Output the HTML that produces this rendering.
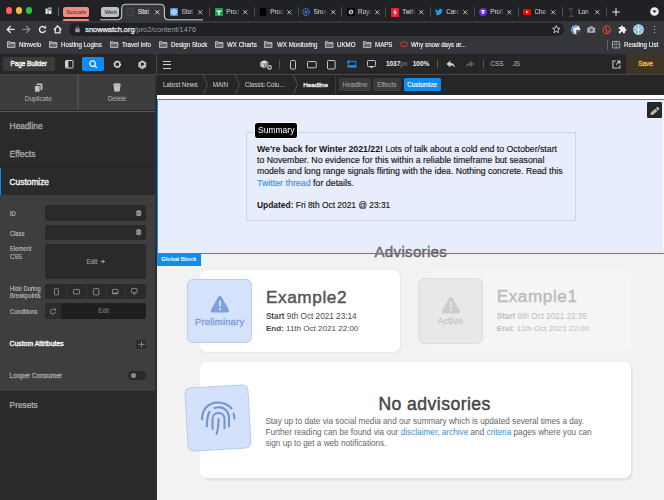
<!DOCTYPE html>
<html><head><meta charset="utf-8">
<style>
*{box-sizing:border-box;margin:0;padding:0}
html,body{width:664px;height:500px;overflow:hidden;background:#2b2b2b}
body{position:relative;font-family:"Liberation Sans",sans-serif;}
.a{position:absolute}
.t{position:absolute;white-space:nowrap}
svg{position:absolute;overflow:visible}
b{font-weight:700;-webkit-text-stroke-width:0}
</style></head><body>
<div class="a" style="left:0px;top:0px;width:664.00px;height:21.00px;background:#202124;"></div>
<div class="a" style="left:6.200000000000001px;top:7.4px;width:6.2px;height:6.2px;border-radius:50%;background:#fe5f57"></div>
<div class="a" style="left:15.799999999999999px;top:7.4px;width:6.2px;height:6.2px;border-radius:50%;background:#febc2e"></div>
<div class="a" style="left:25.799999999999997px;top:7.4px;width:6.2px;height:6.2px;border-radius:50%;background:#28c840"></div>
<svg style="left:45px;top:7px;" width="7" height="8" viewBox="0 0 7 8"><rect x="0.5" y="1.5" width="2.2" height="5.5" fill="#e8eaed"/><rect x="3.4" y="0.5" width="3" height="6.5" fill="#e8eaed"/><rect x="4.2" y="1.5" width="1.4" height="2" fill="#202124"/></svg>
<div class="a" style="left:58px;top:7px;width:1.00px;height:9.00px;background:#5f6368;"></div>
<div class="a" style="left:63px;top:7.2px;width:26px;height:9.8px;border-radius:2.5px;background:#f28b82"></div>
<div class="t" style="left:66.2px;top:8.48px;font-size:6.2px;line-height:7.44px;color:#4a2522;font-weight:400;">Soicals</div>
<div class="a" style="left:63px;top:19px;width:26.00px;height:2.00px;background:#f28b82;border-radius:1px 1px 0 0"></div>
<div class="a" style="left:101px;top:7.2px;width:18px;height:10.3px;border-radius:2.5px;background:#bdc1c6"></div>
<div class="t" style="left:104.4px;top:8.18px;font-size:6.2px;line-height:7.44px;color:#202124;font-weight:400;">Web</div>
<svg style="left:0px;top:0px;" width="664" height="22" viewBox="0 0 664 22"><path d="M100 22 V19.8 H117.5 Q121.7 19.8 121.7 15.6 V8.5 Q121.7 4.3 125.9 4.3 H160.2 Q164.4 4.3 164.4 8.5 V15.6 Q164.4 19.8 168.6 19.8 H203 V22Z" fill="#35363a"/><path d="M100 19.8 H117.5 Q121.7 19.8 121.7 15.6 V8.5 Q121.7 4.3 125.9 4.3 H160.2 Q164.4 4.3 164.4 8.5 V15.6 Q164.4 19.8 168.6 19.8 H203" fill="none" stroke="#c4c7cb" stroke-width="1.1"/></svg>
<div class="a" style="left:127.2px;top:8.4px;width:6.8px;height:7.2px;border-radius:1px;background:#38393c;border:0.8px solid #45464a"></div>
<div class="t" style="left:138.0px;top:8.42px;font-size:6.3px;line-height:7.56px;color:#eef0f2;font-weight:400;width:13.5px;overflow:hidden;-webkit-mask-image:linear-gradient(90deg,#000 55%,transparent);-webkit-text-stroke:0.1px #eef0f2">Stat</div>
<svg style="left:154.7px;top:9.8px;" width="4.6" height="4.6" viewBox="0 0 4.6 4.6"><path d="M0.3 0.3L4.3 4.3M4.3 0.3L0.3 4.3" stroke="#eceef0" stroke-width="0.9"/></svg>
<svg style="left:170.2px;top:8px;" width="8" height="8" viewBox="0 0 8 8"><rect width="8" height="8" rx="1" fill="#4a90d9"/><circle cx="4" cy="4" r="2.4" fill="none" stroke="#e6f0fb" stroke-width="0.9"/><path d="M4 0.8V7.2M1 2.5L7 5.5M1 5.5L7 2.5" stroke="#e6f0fb" stroke-width="0.6"/></svg>
<div class="t" style="left:181.7px;top:8.42px;font-size:6.3px;line-height:7.56px;color:#c9ccd0;font-weight:400;width:13.5px;overflow:hidden;-webkit-mask-image:linear-gradient(90deg,#000 55%,transparent);-webkit-text-stroke:0.1px #c9ccd0">Stat</div>
<svg style="left:198.39999999999998px;top:9.8px;" width="4.6" height="4.6" viewBox="0 0 4.6 4.6"><path d="M0.3 0.3L4.3 4.3M4.3 0.3L0.3 4.3" stroke="#d5d7db" stroke-width="0.9"/></svg>
<div class="a" style="left:209.0px;top:7.2px;width:1.00px;height:9.60px;background:#4a4c50;"></div>
<svg style="left:214.8px;top:8px;" width="8" height="8" viewBox="0 0 8 8"><rect width="8" height="8" rx="0.8" fill="#1e9e4c"/><path d="M1.5 3.2H6.5M4 3.2V7" stroke="#fff" stroke-width="1.3"/></svg>
<div class="t" style="left:226.3px;top:8.42px;font-size:6.3px;line-height:7.56px;color:#c9ccd0;font-weight:400;width:13.5px;overflow:hidden;-webkit-mask-image:linear-gradient(90deg,#000 55%,transparent);-webkit-text-stroke:0.1px #c9ccd0">Prod</div>
<svg style="left:243.0px;top:9.8px;" width="4.6" height="4.6" viewBox="0 0 4.6 4.6"><path d="M0.3 0.3L4.3 4.3M4.3 0.3L0.3 4.3" stroke="#d5d7db" stroke-width="0.9"/></svg>
<div class="a" style="left:253.60000000000002px;top:7.2px;width:1.00px;height:9.60px;background:#4a4c50;"></div>
<svg style="left:258.8px;top:8px;" width="8" height="8" viewBox="0 0 8 8"><rect x="1" y="0" width="6" height="8" rx="0.8" fill="#000"/><rect x="3.6" y="6" width="0.8" height="0.8" fill="#555"/></svg>
<div class="t" style="left:270.3px;top:8.42px;font-size:6.3px;line-height:7.56px;color:#c9ccd0;font-weight:400;width:13.5px;overflow:hidden;-webkit-mask-image:linear-gradient(90deg,#000 55%,transparent);-webkit-text-stroke:0.1px #c9ccd0">Prod</div>
<svg style="left:287.0px;top:9.8px;" width="4.6" height="4.6" viewBox="0 0 4.6 4.6"><path d="M0.3 0.3L4.3 4.3M4.3 0.3L0.3 4.3" stroke="#d5d7db" stroke-width="0.9"/></svg>
<div class="a" style="left:297.6px;top:7.2px;width:1.00px;height:9.60px;background:#4a4c50;"></div>
<svg style="left:302.3px;top:8px;" width="8" height="8" viewBox="0 0 8 8"><circle cx="4" cy="4" r="3.3" fill="none" stroke="#4a90e2" stroke-width="1.3" stroke-dasharray="1.2 0.8"/><circle cx="4" cy="4" r="1.6" fill="#2a6fd0"/></svg>
<div class="t" style="left:313.8px;top:8.42px;font-size:6.3px;line-height:7.56px;color:#c9ccd0;font-weight:400;width:13.5px;overflow:hidden;-webkit-mask-image:linear-gradient(90deg,#000 55%,transparent);-webkit-text-stroke:0.1px #c9ccd0">Snov</div>
<svg style="left:330.5px;top:9.8px;" width="4.6" height="4.6" viewBox="0 0 4.6 4.6"><path d="M0.3 0.3L4.3 4.3M4.3 0.3L0.3 4.3" stroke="#d5d7db" stroke-width="0.9"/></svg>
<div class="a" style="left:341.1px;top:7.2px;width:1.00px;height:9.60px;background:#4a4c50;"></div>
<svg style="left:346.6px;top:8px;" width="8" height="8" viewBox="0 0 8 8"><rect width="8" height="8" rx="1" fill="#000"/><circle cx="4" cy="4" r="2" fill="none" stroke="#fff" stroke-width="0.9"/><path d="M2.3 4.6L5.8 3.2" stroke="#fff" stroke-width="0.8"/></svg>
<div class="t" style="left:358.1px;top:8.42px;font-size:6.3px;line-height:7.56px;color:#c9ccd0;font-weight:400;width:13.5px;overflow:hidden;-webkit-mask-image:linear-gradient(90deg,#000 55%,transparent);-webkit-text-stroke:0.1px #c9ccd0">Roya</div>
<svg style="left:374.8px;top:9.8px;" width="4.6" height="4.6" viewBox="0 0 4.6 4.6"><path d="M0.3 0.3L4.3 4.3M4.3 0.3L0.3 4.3" stroke="#d5d7db" stroke-width="0.9"/></svg>
<div class="a" style="left:385.40000000000003px;top:7.2px;width:1.00px;height:9.60px;background:#4a4c50;"></div>
<svg style="left:390.8px;top:7.5px;" width="8" height="9" viewBox="0 0 8 9"><rect width="8" height="9" fill="#e8222e"/><path d="M4.8 0.8L2.2 4.8H4L3 8.2L5.9 4H4.2Z" fill="#fff"/></svg>
<div class="t" style="left:402.3px;top:8.42px;font-size:6.3px;line-height:7.56px;color:#c9ccd0;font-weight:400;width:13.5px;overflow:hidden;-webkit-mask-image:linear-gradient(90deg,#000 55%,transparent);-webkit-text-stroke:0.1px #c9ccd0">Twitt</div>
<svg style="left:419.0px;top:9.8px;" width="4.6" height="4.6" viewBox="0 0 4.6 4.6"><path d="M0.3 0.3L4.3 4.3M4.3 0.3L0.3 4.3" stroke="#d5d7db" stroke-width="0.9"/></svg>
<div class="a" style="left:429.6px;top:7.2px;width:1.00px;height:9.60px;background:#4a4c50;"></div>
<svg style="left:434.8px;top:8px;" width="8" height="8" viewBox="0 0 8 8"><path d="M7.8 1.6c-.3.1-.6.2-.9.2.3-.2.6-.5.7-.9-.3.2-.7.3-1 .4-.3-.3-.7-.5-1.2-.5-.9 0-1.6.7-1.6 1.6 0 .1 0 .3.0.4C2.5 2.7 1.3 2.1.5 1.1c-.1.2-.2.5-.2.8 0 .6.3 1 .7 1.3-.3 0-.5-.1-.7-.2 0 .8.6 1.4 1.3 1.6-.1 0-.3.1-.4.1h-.3c.2.6.8 1.1 1.5 1.1-.6.4-1.2.7-2 .7H0c.7.4 1.5.7 2.5.7 3 0 4.6-2.5 4.6-4.6v-.2c.3-.3.6-.5.7-.8z" fill="#1d9bf0"/></svg>
<div class="t" style="left:446.3px;top:8.42px;font-size:6.3px;line-height:7.56px;color:#c9ccd0;font-weight:400;width:13.5px;overflow:hidden;-webkit-mask-image:linear-gradient(90deg,#000 55%,transparent);-webkit-text-stroke:0.1px #c9ccd0">Card</div>
<svg style="left:463.0px;top:9.8px;" width="4.6" height="4.6" viewBox="0 0 4.6 4.6"><path d="M0.3 0.3L4.3 4.3M4.3 0.3L0.3 4.3" stroke="#d5d7db" stroke-width="0.9"/></svg>
<div class="a" style="left:473.6px;top:7.2px;width:1.00px;height:9.60px;background:#4a4c50;"></div>
<svg style="left:478.8px;top:8px;" width="8" height="8" viewBox="0 0 8 8"><circle cx="4" cy="4" r="4" fill="#6c2bd9"/><path d="M2.2 2.6H5.8M4 2.6V6" stroke="#fff" stroke-width="1.1"/><path d="M2.6 3.8 L4 5.4 L5.4 3.8" fill="none" stroke="#fff" stroke-width="0.8"/></svg>
<div class="t" style="left:490.3px;top:8.42px;font-size:6.3px;line-height:7.56px;color:#c9ccd0;font-weight:400;width:13.5px;overflow:hidden;-webkit-mask-image:linear-gradient(90deg,#000 55%,transparent);-webkit-text-stroke:0.1px #c9ccd0">Profi</div>
<svg style="left:507.0px;top:9.8px;" width="4.6" height="4.6" viewBox="0 0 4.6 4.6"><path d="M0.3 0.3L4.3 4.3M4.3 0.3L0.3 4.3" stroke="#d5d7db" stroke-width="0.9"/></svg>
<div class="a" style="left:517.6px;top:7.2px;width:1.00px;height:9.60px;background:#4a4c50;"></div>
<svg style="left:523.0px;top:9px;" width="8" height="6" viewBox="0 0 8 6"><rect width="8" height="6" rx="1.5" fill="#ff0000"/><path d="M3.2 1.7V4.3L5.4 3Z" fill="#fff"/></svg>
<div class="t" style="left:534.5px;top:8.42px;font-size:6.3px;line-height:7.56px;color:#c9ccd0;font-weight:400;width:13.5px;overflow:hidden;-webkit-mask-image:linear-gradient(90deg,#000 55%,transparent);-webkit-text-stroke:0.1px #c9ccd0">Cha</div>
<svg style="left:551.2px;top:9.8px;" width="4.6" height="4.6" viewBox="0 0 4.6 4.6"><path d="M0.3 0.3L4.3 4.3M4.3 0.3L0.3 4.3" stroke="#d5d7db" stroke-width="0.9"/></svg>
<div class="a" style="left:561.8px;top:7.2px;width:1.00px;height:9.60px;background:#4a4c50;"></div>
<svg style="left:566.8px;top:7.5px;" width="8" height="9" viewBox="0 0 8 9"><path d="M2.5 0.5H5.5M4 0.5V8.5M2.5 8.5H5.5M2 0.5V2M6 7V8.5" stroke="#6b6b6b" stroke-width="0.6" fill="none"/></svg>
<div class="t" style="left:578.3px;top:8.42px;font-size:6.3px;line-height:7.56px;color:#c9ccd0;font-weight:400;width:13.5px;overflow:hidden;-webkit-mask-image:linear-gradient(90deg,#000 55%,transparent);-webkit-text-stroke:0.1px #c9ccd0">Lon</div>
<svg style="left:595.0px;top:9.8px;" width="4.6" height="4.6" viewBox="0 0 4.6 4.6"><path d="M0.3 0.3L4.3 4.3M4.3 0.3L0.3 4.3" stroke="#d5d7db" stroke-width="0.9"/></svg>
<div class="a" style="left:605.5999999999999px;top:7.2px;width:1.00px;height:9.60px;background:#4a4c50;"></div>
<svg style="left:612px;top:8px;" width="8" height="8" viewBox="0 0 8 8"><path d="M4 0.3V7.7M0.3 4H7.7" stroke="#e8eaed" stroke-width="1.1"/></svg>
<svg style="left:650px;top:6.5px;" width="9" height="9" viewBox="0 0 9 9"><circle cx="4.5" cy="4.5" r="4.3" fill="#e8eaed"/><path d="M2.4 3.6L4.5 5.9L6.6 3.6Z" fill="#202124"/></svg>
<div class="a" style="left:0px;top:21px;width:664.00px;height:33.00px;background:#35363a;"></div>
<svg style="left:6px;top:25px;" width="9" height="9" viewBox="0 0 9 9"><path d="M8.6 4.4H1.4M4.7 1L1.2 4.4L4.7 7.8" stroke="#e8eaed" stroke-width="1.3" fill="none"/></svg>
<svg style="left:22px;top:25px;" width="9" height="9" viewBox="0 0 9 9"><path d="M0.4 4.4H7.6M4.3 1L7.8 4.4L4.3 7.8" stroke="#8a8c90" stroke-width="1.2" fill="none"/></svg>
<svg style="left:37.5px;top:25.2px;" width="9" height="9" viewBox="0 0 9 9"><path d="M7.4 5.3A3 3 0 1 1 6.4 2.2" stroke="#e8eaed" stroke-width="1.35" fill="none"/><path d="M5.2 3.4H8.1V0.5Z" fill="#e8eaed"/></svg>
<svg style="left:53px;top:25px;" width="9" height="9" viewBox="0 0 9 9"><path d="M0.9 4.8L4.6 1L8.3 4.8M2.2 3.7V7.8H7V3.7" stroke="#e8eaed" stroke-width="1.25" fill="none" stroke-linejoin="miter"/></svg>
<div class="a" style="left:68.7px;top:23.2px;width:495.5px;height:12.4px;border-radius:6.2px;background:#202124"></div>
<svg style="left:74.6px;top:26px;" width="5" height="6.5" viewBox="0 0 5 6.5"><rect x="0.3" y="2.6" width="4.4" height="3.6" rx="0.5" fill="#9aa0a6"/><path d="M1.3 2.8V1.8A1.2 1.2 0 0 1 3.7 1.8V2.8" stroke="#9aa0a6" stroke-width="0.7" fill="none"/></svg>
<div class="t" style="left:85.3px;top:25.57px;font-size:7.38px;line-height:8.86px;color:#e8eaed;font-weight:400;"><span style="color:#f1f3f4;-webkit-text-stroke:0.25px #f1f3f4">snowwatch.org</span><span style="color:#9aa0a6">/pro2/content/1476</span></div>
<svg style="left:551.5px;top:25.3px;" width="8.6" height="8.4" viewBox="0 0 8.6 8.4"><path d="M4.3 0.6L5.4 3.1L8 3.3L6 5L6.6 7.7L4.3 6.3L2 7.7L2.6 5L0.6 3.3L3.2 3.1Z" stroke="#e8eaed" stroke-width="0.8" fill="none" stroke-linejoin="round"/></svg>
<svg style="left:571.2px;top:24.6px;" width="9.6" height="9.6" viewBox="0 0 9.6 9.6"><circle cx="4.8" cy="4.8" r="4.5" fill="#e4eef9"/><path d="M6.2 1.6A3.4 3.4 0 1 0 3.6 8" stroke="#3d86d8" stroke-width="1.3" fill="none"/><rect x="5.3" y="4.9" width="3.6" height="4.2" rx="0.4" fill="#3a3b3e"/><rect x="6" y="5.8" width="2.2" height="0.5" fill="#cfd8e3"/></svg>
<svg style="left:587.3px;top:25.8px;" width="8.4" height="7" viewBox="0 0 8.4 7"><rect x="0.2" y="1.4" width="8" height="5.4" rx="0.9" fill="#aeb1b6"/><rect x="2.6" y="0.2" width="3.2" height="1.6" rx="0.3" fill="#aeb1b6"/><circle cx="4.2" cy="4.1" r="1.5" fill="#35363a"/><circle cx="4.2" cy="4.1" r="0.7" fill="#aeb1b6"/></svg>
<svg style="left:602.3px;top:24.6px;" width="9.6" height="9.6" viewBox="0 0 9.6 9.6"><circle cx="4.8" cy="4.8" r="3.9" fill="none" stroke="#d9461f" stroke-width="1.15"/><path d="M3.2 1.8L4.6 6.6" stroke="#d9461f" stroke-width="1.1"/><circle cx="5.4" cy="6" r="1.2" fill="none" stroke="#d9461f" stroke-width="0.9"/></svg>
<svg style="left:618.3px;top:25px;" width="9" height="9" viewBox="0 0 9 9"><g transform="scale(0.375)"><path d="M20.5 11H19V7c0-1.1-.9-2-2-2h-4V3.5C13 2.12 11.880 1 10.5 1S8 2.12 8 3.5V5H4c-1.1 0-1.99.9-1.99 2v3.8H3.5c1.49 0 2.7 1.21 2.7 2.7s-1.21 2.7-2.7 2.7H2V20c0 1.1.9 2 2 2h3.8v-1.5c0-1.49 1.21-2.7 2.7-2.7 1.49 0 2.7 1.21 2.7 2.7V22H17c1.1 0 2-.9 2-2v-4h1.5c1.38 0 2.5-1.12 2.5-2.5S21.88 11 20.5 11z" fill="#eceef0"/></g></svg>
<svg style="left:633.1px;top:24.0px;" width="11" height="11" viewBox="0 0 11 11"><circle cx="5.5" cy="5.5" r="5.3" fill="#dcecf8"/><circle cx="5.5" cy="5.5" r="4.3" fill="#5eaee9"/><path d="M5.5 1.5V9.5M2.05 3.5L8.95 7.5M2.05 7.5L8.95 3.5" stroke="#f4f9fd" stroke-width="0.85"/><path d="M4.6 2.1L5.5 3L6.4 2.1M4.6 8.9L5.5 8L6.4 8.9M2.3 4.6L3.4 4.6M2.6 6.8L3.4 6.4M8.4 6.8L7.6 6.4M8.7 4.6L7.6 4.6" stroke="#f4f9fd" stroke-width="0.55" fill="none"/></svg>
<div class="a" style="left:653.8px;top:25.85px;width:1.5px;height:1.5px;border-radius:50%;background:#e8eaed"></div>
<div class="a" style="left:653.8px;top:28.85px;width:1.5px;height:1.5px;border-radius:50%;background:#e8eaed"></div>
<div class="a" style="left:653.8px;top:31.85px;width:1.5px;height:1.5px;border-radius:50%;background:#e8eaed"></div>
<svg style="left:6.6px;top:41.3px;" width="8.4" height="7" viewBox="0 0 8.4 7"><path d="M0.45 0.6H3L3.8 1.5H7.95V6.45H0.45Z" fill="#67686c" stroke="#c4c7cb" stroke-width="0.85"/><path d="M0.45 2.4H7.95" stroke="#c4c7cb" stroke-width="0.7"/></svg>
<div class="t" style="left:18.7px;top:40.94px;font-size:6.6px;line-height:7.92px;color:#f0f2f4;font-weight:400;-webkit-text-stroke:0.15px #f0f2f4;transform:scaleX(0.935);transform-origin:0 50%">Nimvelo</div>
<svg style="left:48.7px;top:41.3px;" width="8.4" height="7" viewBox="0 0 8.4 7"><path d="M0.45 0.6H3L3.8 1.5H7.95V6.45H0.45Z" fill="#67686c" stroke="#c4c7cb" stroke-width="0.85"/><path d="M0.45 2.4H7.95" stroke="#c4c7cb" stroke-width="0.7"/></svg>
<div class="t" style="left:60.9px;top:40.94px;font-size:6.6px;line-height:7.92px;color:#f0f2f4;font-weight:400;-webkit-text-stroke:0.15px #f0f2f4;transform:scaleX(0.935);transform-origin:0 50%">Hosting Logins</div>
<svg style="left:109.8px;top:41.3px;" width="8.4" height="7" viewBox="0 0 8.4 7"><path d="M0.45 0.6H3L3.8 1.5H7.95V6.45H0.45Z" fill="#67686c" stroke="#c4c7cb" stroke-width="0.85"/><path d="M0.45 2.4H7.95" stroke="#c4c7cb" stroke-width="0.7"/></svg>
<div class="t" style="left:122px;top:40.94px;font-size:6.6px;line-height:7.92px;color:#f0f2f4;font-weight:400;-webkit-text-stroke:0.15px #f0f2f4;transform:scaleX(0.935);transform-origin:0 50%">Travel Info</div>
<svg style="left:158.6px;top:41.3px;" width="8.4" height="7" viewBox="0 0 8.4 7"><path d="M0.45 0.6H3L3.8 1.5H7.95V6.45H0.45Z" fill="#67686c" stroke="#c4c7cb" stroke-width="0.85"/><path d="M0.45 2.4H7.95" stroke="#c4c7cb" stroke-width="0.7"/></svg>
<div class="t" style="left:170.8px;top:40.94px;font-size:6.6px;line-height:7.92px;color:#f0f2f4;font-weight:400;-webkit-text-stroke:0.15px #f0f2f4;transform:scaleX(0.935);transform-origin:0 50%">Design Stock</div>
<svg style="left:214.8px;top:41.3px;" width="8.4" height="7" viewBox="0 0 8.4 7"><path d="M0.45 0.6H3L3.8 1.5H7.95V6.45H0.45Z" fill="#67686c" stroke="#c4c7cb" stroke-width="0.85"/><path d="M0.45 2.4H7.95" stroke="#c4c7cb" stroke-width="0.7"/></svg>
<div class="t" style="left:227px;top:40.94px;font-size:6.6px;line-height:7.92px;color:#f0f2f4;font-weight:400;-webkit-text-stroke:0.15px #f0f2f4;transform:scaleX(0.935);transform-origin:0 50%">WX Charts</div>
<svg style="left:264.4px;top:41.3px;" width="8.4" height="7" viewBox="0 0 8.4 7"><path d="M0.45 0.6H3L3.8 1.5H7.95V6.45H0.45Z" fill="#67686c" stroke="#c4c7cb" stroke-width="0.85"/><path d="M0.45 2.4H7.95" stroke="#c4c7cb" stroke-width="0.7"/></svg>
<div class="t" style="left:276.6px;top:40.94px;font-size:6.6px;line-height:7.92px;color:#f0f2f4;font-weight:400;-webkit-text-stroke:0.15px #f0f2f4;transform:scaleX(0.935);transform-origin:0 50%">WX Monitoring</div>
<svg style="left:324.7px;top:41.3px;" width="8.4" height="7" viewBox="0 0 8.4 7"><path d="M0.45 0.6H3L3.8 1.5H7.95V6.45H0.45Z" fill="#67686c" stroke="#c4c7cb" stroke-width="0.85"/><path d="M0.45 2.4H7.95" stroke="#c4c7cb" stroke-width="0.7"/></svg>
<div class="t" style="left:336.9px;top:40.94px;font-size:6.6px;line-height:7.92px;color:#f0f2f4;font-weight:400;-webkit-text-stroke:0.15px #f0f2f4;transform:scaleX(0.935);transform-origin:0 50%">UKMO</div>
<svg style="left:362.6px;top:41.3px;" width="8.4" height="7" viewBox="0 0 8.4 7"><path d="M0.45 0.6H3L3.8 1.5H7.95V6.45H0.45Z" fill="#67686c" stroke="#c4c7cb" stroke-width="0.85"/><path d="M0.45 2.4H7.95" stroke="#c4c7cb" stroke-width="0.7"/></svg>
<div class="t" style="left:374.8px;top:40.94px;font-size:6.6px;line-height:7.92px;color:#f0f2f4;font-weight:400;-webkit-text-stroke:0.15px #f0f2f4;transform:scaleX(0.935);transform-origin:0 50%">MAPS</div>
<svg style="left:400px;top:41px;" width="8" height="7" viewBox="0 0 8 7"><ellipse cx="4" cy="3.2" rx="3.4" ry="2.5" fill="none" stroke="#e0352b" stroke-width="1"/><path d="M1.8 5.2L1.2 6.8L3.2 5.6" fill="#e0352b"/></svg>
<div class="t" style="left:411px;top:40.94px;font-size:6.6px;line-height:7.92px;color:#f0f2f4;font-weight:400;-webkit-text-stroke:0.15px #f0f2f4;transform:scaleX(0.935);transform-origin:0 50%">Why snow days ar...</div>
<div class="a" style="left:606.5px;top:39.5px;width:1.00px;height:10.50px;background:#5f6368;"></div>
<svg style="left:612px;top:41px;" width="8.2" height="7.4" viewBox="0 0 8.2 7.4"><rect x="0.45" y="0.45" width="7.3" height="6.5" rx="0.8" fill="none" stroke="#bdc1c6" stroke-width="0.85"/><path d="M4.1 0.6V6.8M1.6 2.3H3M1.6 3.7H3M5.2 2.3H6.6M5.2 3.7H6.6" stroke="#bdc1c6" stroke-width="0.6"/></svg>
<div class="t" style="left:623.8px;top:40.94px;font-size:6.6px;line-height:7.92px;color:#f0f2f4;font-weight:400;-webkit-text-stroke:0.15px #f0f2f4;transform:scaleX(0.935);transform-origin:0 50%">Reading List</div>
<div class="a" style="left:0px;top:54px;width:664.00px;height:20.20px;background:#262626;"></div>
<div class="a" style="left:0px;top:74.2px;width:664.00px;height:1.00px;background:#474747;"></div>
<div class="a" style="left:2.9px;top:57.2px;width:52.1px;height:13.8px;border-radius:2px;background:#3a3a3a"></div>
<div class="t" style="left:10.4px;top:60.46px;font-size:6.4px;line-height:7.68px;color:#f4f4f4;font-weight:400;-webkit-text-stroke:0.38px #f4f4f4">Page Builder</div>
<svg style="left:64.5px;top:60px;" width="8.5" height="8.5" viewBox="0 0 8.5 8.5"><rect x="0.5" y="0.5" width="7.5" height="7.5" rx="0.6" fill="none" stroke="#d0d0d0" stroke-width="1"/><rect x="1" y="1" width="2.4" height="6.5" fill="#d0d0d0"/></svg>
<div class="a" style="left:82.4px;top:57.2px;width:21.6px;height:13.8px;border-radius:2px;background:#0f8cf0"></div>
<svg style="left:89px;top:60px;" width="8.5" height="8.5" viewBox="0 0 8.5 8.5"><circle cx="3.6" cy="3.6" r="2.8" fill="none" stroke="#fff" stroke-width="1.2"/><path d="M5.7 5.7L7.9 7.9" stroke="#fff" stroke-width="1.3"/></svg>
<svg style="left:113px;top:60px;" width="8.6" height="8.6" viewBox="0 0 8.6 8.6"><circle cx="4.3" cy="4.3" r="2.9" fill="none" stroke="#d8d8d8" stroke-width="1.9" stroke-dasharray="1.3 0.9"/><circle cx="4.3" cy="4.3" r="2.6" fill="none" stroke="#d8d8d8" stroke-width="1.2"/></svg>
<svg style="left:137.8px;top:59.6px;" width="8.5" height="9.4" viewBox="0 0 8.5 9.4"><path d="M4.25 0.2L8.2 2.5V6.9L4.25 9.2L0.3 6.9V2.5Z" fill="#bdbdbd"/><path d="M3 3H5A1.1 1.1 0 0 1 5 5.3H3.8V6.6H3Z" fill="#262626"/></svg>
<div class="a" style="left:156.2px;top:54px;width:0.80px;height:20.20px;background:#474747;"></div>
<div class="a" style="left:162.9px;top:61px;width:7.80px;height:1.10px;background:#d0d0d0;"></div>
<div class="a" style="left:162.9px;top:64.3px;width:7.80px;height:1.10px;background:#d0d0d0;"></div>
<div class="a" style="left:162.9px;top:67.6px;width:7.80px;height:1.10px;background:#d0d0d0;"></div>
<svg style="left:260.3px;top:59.5px;" width="13" height="10" viewBox="0 0 13 10"><path d="M4.3 0.3L8.3 2.1L4.3 3.9L0.3 2.1Z" fill="#dcdcdc"/><path d="M0.3 2.1L4.3 3.9V8.3L0.3 6.5Z" fill="#c6c6c6"/><path d="M4.3 3.9L8.3 2.1V6.5L4.3 8.3Z" fill="#9c9c9c"/><circle cx="9.6" cy="7.4" r="2.9" fill="#262626"/><circle cx="9.6" cy="7.4" r="1.75" fill="none" stroke="#cfcfcf" stroke-width="1.2"/></svg>
<div class="a" style="left:279px;top:59.6px;width:1.00px;height:9.20px;background:#555;"></div>
<svg style="left:289.5px;top:59.5px;" width="6" height="10" viewBox="0 0 6 10"><rect x="0.5" y="0.5" width="5" height="8.6" rx="0.9" fill="none" stroke="#cfcfcf" stroke-width="0.95"/></svg>
<svg style="left:307px;top:60.8px;" width="10" height="7.5" viewBox="0 0 10 7.5"><rect x="0.5" y="0.5" width="8.8" height="6.3" rx="0.9" fill="none" stroke="#cfcfcf" stroke-width="0.95"/></svg>
<svg style="left:327px;top:59.8px;" width="8.8" height="9.5" viewBox="0 0 8.8 9.5"><rect x="0.5" y="0.5" width="7.6" height="8.5" rx="0.9" fill="none" stroke="#cfcfcf" stroke-width="0.95"/></svg>
<svg style="left:346.5px;top:59.5px;" width="10" height="8" viewBox="0 0 10 8"><rect x="1.1" y="1.3" width="7.6" height="4.4" fill="none" stroke="#1e90ff" stroke-width="0.95"/><rect x="0.4" y="6" width="9.2" height="1.4" rx="0.3" fill="#1e90ff"/><circle cx="1.5" cy="1.7" r="1.3" fill="#1e90ff"/></svg>
<svg style="left:366.7px;top:59.8px;" width="9" height="8.5" viewBox="0 0 9 8.5"><rect x="0.5" y="0.5" width="8" height="6" rx="0.8" fill="none" stroke="#c4c4c4" stroke-width="1"/><path d="M3 6.5H6L5.5 7.9H3.5Z" fill="#c4c4c4"/></svg>
<div class="t" style="left:385.9px;top:60.30px;font-size:6.5px;line-height:7.80px;color:#f0f0f0;font-weight:700;">1037<span style="color:#8a8a8a;font-weight:400">px</span></div>
<div class="t" style="left:412.7px;top:60.30px;font-size:6.5px;line-height:7.80px;color:#f0f0f0;font-weight:700;">100%</div>
<div class="a" style="left:437.3px;top:58.8px;width:1.00px;height:10.60px;background:#555;"></div>
<svg style="left:445.8px;top:60px;" width="9.5" height="8.6" viewBox="0 0 9.5 8.6"><path d="M4.2 0.6L0.6 4.1L4.2 7.6V5.6C6.3 5.4 8 5.9 9 7.8C8.8 4.8 7 3 4.2 2.8Z" fill="#d0d0d0"/></svg>
<svg style="left:465px;top:60px;" width="9.5" height="8.6" viewBox="0 0 9.5 8.6"><path d="M5.3 0.6L8.9 4.1L5.3 7.6V5.6C3.2 5.4 1.5 5.9 0.5 7.8C0.7 4.8 2.5 3 5.3 2.8Z" fill="#5c5c5c"/></svg>
<div class="a" style="left:483px;top:58.8px;width:1.00px;height:10.60px;background:#555;"></div>
<div class="t" style="left:490.5px;top:60.42px;font-size:6.3px;line-height:7.56px;color:#bdbdbd;font-weight:400;">CSS</div>
<div class="t" style="left:512.7px;top:60.42px;font-size:6.3px;line-height:7.56px;color:#bdbdbd;font-weight:400;">JS</div>
<svg style="left:611.7px;top:59.6px;" width="9" height="9" viewBox="0 0 9 9"><path d="M3.8 0.9H0.9V7.9H7.9V5" stroke="#c8c8c8" stroke-width="1.05" fill="none" stroke-linejoin="miter"/><path d="M4.2 4.6L7.9 0.9M5 0.9H7.9V3.8" stroke="#c8c8c8" stroke-width="1.05" fill="none"/></svg>
<div class="a" style="left:626px;top:54px;width:38.00px;height:20.20px;background:#3f3527;"></div>
<div class="t" style="left:638.3px;top:60.22px;font-size:6.3px;line-height:7.56px;color:#eabb32;font-weight:400;-webkit-text-stroke:0.35px #eabb32">Save</div>
<div class="a" style="left:0px;top:75.2px;width:155.30px;height:424.80px;background:#2a2a2a;"></div>
<div class="a" style="left:155.3px;top:75.2px;width:1.40px;height:424.80px;background:#2e2e2e;"></div>
<div class="a" style="left:0px;top:75.2px;width:155.30px;height:35.30px;background:#3d3d3d;"></div>
<div class="a" style="left:77.3px;top:75.2px;width:1.30px;height:35.30px;background:#4e4e4e;"></div>
<div class="a" style="left:0px;top:110.5px;width:155.00px;height:1.20px;background:#575757;"></div>
<svg style="left:34px;top:82.5px;" width="9" height="9.5" viewBox="0 0 9 9.5"><rect x="2.8" y="0.5" width="5.6" height="6.6" fill="#c2c2c2"/><rect x="0.5" y="2.5" width="5.6" height="6.6" fill="#c2c2c2" stroke="#3b3b3b" stroke-width="0.9"/></svg>
<div class="t" style="left:24.8px;top:95.12px;font-size:6.47px;line-height:7.76px;color:#a6a6a6;font-weight:400;-webkit-text-stroke:0.12px #a6a6a6">Duplicate</div>
<svg style="left:113px;top:82.5px;" width="8" height="9" viewBox="0 0 8 9"><ellipse cx="4" cy="1.6" rx="3.8" ry="1.3" fill="#c2c2c2"/><path d="M0.5 2.6L1.4 8.6H6.6L7.5 2.6Z" fill="#c2c2c2"/></svg>
<div class="t" style="left:107.7px;top:95.12px;font-size:6.47px;line-height:7.76px;color:#a6a6a6;font-weight:400;-webkit-text-stroke:0.12px #a6a6a6">Delete</div>
<div class="t" style="left:9.6px;top:121.16px;font-size:8.4px;line-height:10.08px;color:#ababab;font-weight:400;-webkit-text-stroke:0.3px #ababab">Headline</div>
<div class="t" style="left:9.6px;top:148.80px;font-size:8.5px;line-height:10.20px;color:#ababab;font-weight:400;-webkit-text-stroke:0.3px #ababab">Effects</div>
<div class="a" style="left:0px;top:166.8px;width:155.00px;height:0.80px;background:#262626;"></div>
<div class="t" style="left:9.6px;top:177.29px;font-size:8.35px;line-height:10.02px;color:#f5f5f5;font-weight:400;-webkit-text-stroke:0.35px #f5f5f5">Customize</div>
<div class="a" style="left:0px;top:167.6px;width:1.30px;height:27.70px;background:#0f8cf0;"></div>
<div class="a" style="left:0px;top:195.3px;width:155.30px;height:195.70px;background:#3e3e3e;"></div>
<div class="t" style="left:9.6px;top:210.28px;font-size:6.7px;line-height:8.04px;color:#b4b4b4;font-weight:400;-webkit-text-stroke:0.2px #b4b4b4;transform:scaleX(0.87);transform-origin:0 50%">ID</div>
<div class="a" style="left:45px;top:205px;width:100.80px;height:15.60px;border-radius:2px;background:#2a2a2a"></div>
<svg style="left:135.8px;top:209.7px;" width="5.4" height="6.6" viewBox="0 0 5.4 6.6"><ellipse cx="2.7" cy="1.2" rx="2.5" ry="1" fill="#a0a0a0"/><path d="M0.2 1.8V5.3C0.2 6.2 5.2 6.2 5.2 5.3V1.8C5.2 2.6 0.2 2.6 0.2 1.8Z" fill="#a0a0a0"/><path d="M0.2 3.5C0.2 4.3 5.2 4.3 5.2 3.5" stroke="#2a2a2a" stroke-width="0.45" fill="none"/></svg>
<div class="t" style="left:9.6px;top:229.78px;font-size:6.7px;line-height:8.04px;color:#b4b4b4;font-weight:400;-webkit-text-stroke:0.2px #b4b4b4;transform:scaleX(0.87);transform-origin:0 50%">Class</div>
<div class="a" style="left:45px;top:225px;width:100.80px;height:15.20px;border-radius:2px;background:#2a2a2a"></div>
<svg style="left:135.8px;top:229.29999999999998px;" width="5.4" height="6.6" viewBox="0 0 5.4 6.6"><ellipse cx="2.7" cy="1.2" rx="2.5" ry="1" fill="#a0a0a0"/><path d="M0.2 1.8V5.3C0.2 6.2 5.2 6.2 5.2 5.3V1.8C5.2 2.6 0.2 2.6 0.2 1.8Z" fill="#a0a0a0"/><path d="M0.2 3.5C0.2 4.3 5.2 4.3 5.2 3.5" stroke="#2a2a2a" stroke-width="0.45" fill="none"/></svg>
<div class="t" style="left:9.6px;top:245.38px;font-size:6.7px;line-height:8.04px;color:#b4b4b4;font-weight:400;-webkit-text-stroke:0.2px #b4b4b4;transform:scaleX(0.87);transform-origin:0 50%">Element</div>
<div class="t" style="left:9.6px;top:252.68px;font-size:6.7px;line-height:8.04px;color:#b4b4b4;font-weight:400;-webkit-text-stroke:0.2px #b4b4b4;transform:scaleX(0.87);transform-origin:0 50%">CSS</div>
<div class="a" style="left:45px;top:244.2px;width:100.80px;height:34.60px;border-radius:2px;background:#2a2a2a"></div>
<div class="t" style="left:86.4px;top:257.70px;font-size:6.5px;line-height:7.80px;color:#9a9a9a;font-weight:400;-webkit-text-stroke:0.15px #9a9a9a">Edit</div>
<svg style="left:99.6px;top:259.2px;" width="5.4" height="5" viewBox="0 0 5.4 5"><path d="M0.4 2.5H4.6M2.6 0.5L4.6 2.5L2.6 4.5" stroke="#9a9a9a" stroke-width="1" fill="none"/></svg>
<div class="t" style="left:9.6px;top:284.68px;font-size:6.7px;line-height:8.04px;color:#b4b4b4;font-weight:400;-webkit-text-stroke:0.2px #b4b4b4;transform:scaleX(0.87);transform-origin:0 50%">Hide During</div>
<div class="t" style="left:9.6px;top:292.38px;font-size:6.7px;line-height:8.04px;color:#b4b4b4;font-weight:400;-webkit-text-stroke:0.2px #b4b4b4;transform:scaleX(0.87);transform-origin:0 50%">Breakpoints</div>
<div class="a" style="left:45px;top:284px;width:100.80px;height:14.60px;border-radius:2px;background:#2a2a2a"></div>
<div class="a" style="left:66.3px;top:286px;width:0;height:10.5px;border-left:0.8px dotted #464646"></div>
<div class="a" style="left:86px;top:286px;width:0;height:10.5px;border-left:0.8px dotted #464646"></div>
<div class="a" style="left:105.5px;top:286px;width:0;height:10.5px;border-left:0.8px dotted #464646"></div>
<div class="a" style="left:125.3px;top:286px;width:0;height:10.5px;border-left:0.8px dotted #464646"></div>
<svg style="left:53.9px;top:287.8px;" width="4.8" height="7.4" viewBox="0 0 4.8 7.4"><rect x="0.45" y="0.45" width="3.9" height="6.5" rx="0.8" fill="none" stroke="#8e8e8e" stroke-width="0.9"/></svg>
<svg style="left:72.5px;top:288.8px;" width="7" height="5.4" viewBox="0 0 7 5.4"><rect x="0.45" y="0.45" width="6.1" height="4.5" rx="0.7" fill="none" stroke="#8e8e8e" stroke-width="0.9"/></svg>
<svg style="left:92.6px;top:287.8px;" width="6.3" height="7.4" viewBox="0 0 6.3 7.4"><rect x="0.45" y="0.45" width="5.4" height="6.5" rx="0.9" fill="none" stroke="#8e8e8e" stroke-width="0.9"/></svg>
<svg style="left:112px;top:288.8px;" width="6.4" height="5.4" viewBox="0 0 6.4 5.4"><rect x="0.45" y="0.45" width="5.5" height="4.5" rx="0.6" fill="none" stroke="#8e8e8e" stroke-width="0.9"/><rect x="0.4" y="3.6" width="5.6" height="1.3" fill="#8e8e8e"/></svg>
<svg style="left:131.4px;top:287.8px;" width="6.6" height="6.8" viewBox="0 0 6.6 6.8"><rect x="0.45" y="0.45" width="5.7" height="4.4" rx="0.6" fill="none" stroke="#8e8e8e" stroke-width="0.9"/><path d="M1.8 5.2H4.8L4 6.4H2.6Z" fill="#8e8e8e"/></svg>
<div class="t" style="left:9.6px;top:307.88px;font-size:6.7px;line-height:8.04px;color:#b4b4b4;font-weight:400;-webkit-text-stroke:0.2px #b4b4b4;transform:scaleX(0.87);transform-origin:0 50%">Conditions</div>
<div class="a" style="left:45px;top:303.2px;width:100.8px;height:15.4px;border-radius:2px;background:#1f1f1f"></div>
<div class="a" style="left:45px;top:303.2px;width:16px;height:15.4px;border-radius:2px 0 0 2px;background:#2c2c2c"></div>
<svg style="left:49.6px;top:307.6px;" width="6.6" height="6.6" viewBox="0 0 6.6 6.6"><path d="M5.3 3.6A2.5 2.5 0 1 1 3.2 1.1" fill="none" stroke="#9a9a9a" stroke-width="0.85"/><circle cx="4.9" cy="1.6" r="1" fill="#9a9a9a"/></svg>
<div class="t" style="left:98.2px;top:307.42px;font-size:6.3px;line-height:7.56px;color:#8a8a8a;font-weight:400;">Edit</div>
<div class="t" style="left:9.6px;top:340.19px;font-size:6.85px;line-height:8.22px;color:#f4f4f4;font-weight:400;-webkit-text-stroke:0.38px #f4f4f4">Custom Attributes</div>
<div class="a" style="left:136px;top:339.6px;width:9.8px;height:9px;border-radius:1.5px;background:#2c2c2c"></div>
<svg style="left:137.5px;top:340.8px;" width="7" height="6.8" viewBox="0 0 7 6.8"><path d="M3.5 0.3V6.5M0.3 3.4H6.7" stroke="#9a9a9a" stroke-width="0.8"/></svg>
<div class="t" style="left:9.6px;top:371.67px;font-size:6.55px;line-height:7.86px;color:#a8a8a8;font-weight:400;-webkit-text-stroke:0.28px #a8a8a8">Looper Consumer</div>
<div class="a" style="left:128.2px;top:370.7px;width:17.6px;height:9.6px;border-radius:4.8px;background:#2a2a2a"></div>
<div class="a" style="left:131.3px;top:373.3px;width:4.4px;height:4.4px;border-radius:50%;background:#8a8a8a"></div>
<div class="t" style="left:9.6px;top:401.32px;font-size:8.3px;line-height:9.96px;color:#b8b8b8;font-weight:400;-webkit-text-stroke:0.2px #b8b8b8">Presets</div>
<div class="a" style="left:156.7px;top:75.2px;width:507.30px;height:19.40px;background:#262626;"></div>
<div class="t" style="left:162.9px;top:80.94px;font-size:6.6px;line-height:7.92px;color:#bdbdbd;font-weight:400;-webkit-text-stroke:0.15px #bdbdbd;transform:scaleX(0.955);transform-origin:0 50%">Latest News</div>
<div class="t" style="left:213.3px;top:80.94px;font-size:6.6px;line-height:7.92px;color:#bdbdbd;font-weight:400;-webkit-text-stroke:0.15px #bdbdbd;transform:scaleX(0.91);transform-origin:0 50%">MAIN</div>
<div class="t" style="left:244.6px;top:80.94px;font-size:6.6px;line-height:7.92px;color:#bdbdbd;font-weight:400;-webkit-text-stroke:0.15px #bdbdbd;transform:scaleX(0.935);transform-origin:0 50%">Classic Colu...</div>
<div class="t" style="left:303.2px;top:80.94px;font-size:6.26px;line-height:7.51px;color:#f2f2f2;font-weight:400;-webkit-text-stroke:0.32px #f2f2f2">Headline</div>
<svg style="left:202.6px;top:75.2px;" width="6" height="19.4" viewBox="0 0 6 19.4"><path d="M0.3 0L4.5 9.7L0.3 19.4" stroke="#5a5a5a" stroke-width="0.8" fill="none"/></svg>
<svg style="left:234.5px;top:75.2px;" width="6" height="19.4" viewBox="0 0 6 19.4"><path d="M0.3 0L4.5 9.7L0.3 19.4" stroke="#5a5a5a" stroke-width="0.8" fill="none"/></svg>
<svg style="left:292.8px;top:75.2px;" width="6" height="19.4" viewBox="0 0 6 19.4"><path d="M0.3 0L4.5 9.7L0.3 19.4" stroke="#5a5a5a" stroke-width="0.8" fill="none"/></svg>
<div class="a" style="left:335px;top:75.2px;width:1.00px;height:19.40px;background:#3a3a3a;"></div>
<div class="a" style="left:338.9px;top:78.2px;width:32.10px;height:13.2px;border-radius:1.5px;background:#3a3a3a"></div>
<div class="t" style="left:342.6px;top:81.02px;font-size:6.3px;line-height:7.56px;color:#9c9c9c;font-weight:400;-webkit-text-stroke:0.15px #9c9c9c">Headline</div>
<div class="a" style="left:373.4px;top:78.2px;width:27.60px;height:13.2px;border-radius:1.5px;background:#3a3a3a"></div>
<div class="t" style="left:377.2px;top:81.02px;font-size:6.3px;line-height:7.56px;color:#9c9c9c;font-weight:400;-webkit-text-stroke:0.15px #9c9c9c">Effects</div>
<div class="a" style="left:403.5px;top:78.2px;width:37.30px;height:13.2px;border-radius:1.5px;background:#0f8cf0"></div>
<div class="t" style="left:407.3px;top:81.02px;font-size:6.3px;line-height:7.56px;color:#ffffff;font-weight:400;-webkit-text-stroke:0.15px #ffffff">Customize</div>
<div class="a" style="left:156.7px;top:94.6px;width:507.30px;height:405.40px;background:#f2f2f2;"></div>
<div class="a" style="left:156.7px;top:94.6px;width:507.30px;height:4.40px;background:#ffffff;"></div>
<div class="a" style="left:156.7px;top:99px;width:507.30px;height:154.50px;background:#e8edfb;"></div>
<div class="a" style="left:245.8px;top:131.8px;width:330.4px;height:89px;border:1.2px solid #cbd3e5"></div>
<div class="a" style="left:254.6px;top:123.1px;width:42.4px;height:14.9px;border-radius:2.5px;background:#050505;box-shadow:0 0 0 1px #f7f9fe"></div>
<div class="t" style="left:257.8px;top:125.42px;font-size:9.3px;line-height:11.16px;color:#ffffff;font-weight:400;transform:scaleX(0.915);transform-origin:0 0">Summary</div>
<div class="t" style="left:257px;top:143.64px;font-size:8.77px;line-height:10.52px;color:#151515;font-weight:400;letter-spacing:-0.02px;-webkit-text-stroke:0.15px #151515"><b>We're back for Winter 2021/22!</b> Lots of talk about a cold end to October/start</div>
<div class="t" style="left:257px;top:154.76px;font-size:8.74px;line-height:10.49px;color:#151515;font-weight:400;-webkit-text-stroke:0.15px #151515">to November. No evidence for this within a reliable timeframe but seasonal</div>
<div class="t" style="left:257px;top:165.90px;font-size:8.66px;line-height:10.39px;color:#151515;font-weight:400;-webkit-text-stroke:0.15px #151515">models and long range signals flirting with the idea. Nothing concrete. Read this</div>
<div class="t" style="left:257px;top:178.09px;font-size:8.85px;line-height:10.62px;color:#151515;font-weight:400;-webkit-text-stroke:0.15px #151515"><span style="color:#3795dc;-webkit-text-stroke-color:#3795dc">Twitter thread</span> for details.</div>
<div class="t" style="left:257px;top:200.35px;font-size:8.42px;line-height:10.10px;color:#151515;font-weight:400;-webkit-text-stroke:0.15px #151515"><b>Updated:</b> Fri 8th Oct 2021 @ 23:31</div>
<div class="a" style="left:647px;top:102.3px;width:15.3px;height:15.4px;border-radius:1.2px;background:#272727"></div>
<svg style="left:647px;top:102.3px;" width="15.3" height="15.4" viewBox="0 0 15.3 15.4"><g transform="translate(7.7 9.3) rotate(-41)"><path d="M-5.6 0 L-3.6 -1.6 H2.2 V1.6 H-3.6 Z" fill="#b8b8b8"/><rect x="2.9" y="-1.6" width="2.4" height="3.2" rx="0.5" fill="#b8b8b8"/></g></svg>
<div class="t" style="left:374.5px;top:242.74px;font-size:15.1px;line-height:18.12px;color:#62676d;font-weight:400;-webkit-text-stroke:0.4px #62676d;letter-spacing:0.3px">Advisories</div>
<div class="a" style="left:156.7px;top:98.8px;width:507.30px;height:1.30px;background:#1a8cff;"></div>
<div class="a" style="left:156.7px;top:98.8px;width:1.30px;height:154.90px;background:#1a8cff;"></div>
<div class="a" style="left:156.7px;top:252.5px;width:507.30px;height:1.20px;background:#1a8cff;"></div>
<div class="a" style="left:663px;top:100.1px;width:1.00px;height:152.40px;background:#f4f7fe;"></div>
<div class="a" style="left:157.2px;top:253.6px;width:43.40px;height:12.10px;background:#0f8cf0;"></div>
<div class="t" style="left:161.3px;top:256.24px;font-size:5.76px;line-height:6.91px;color:#ffffff;font-weight:700;">Global Block</div>
<div class="a" style="left:199.7px;top:269.6px;width:200.5px;height:82.2px;border-radius:6.5px;background:#ffffff;box-shadow:0.5px 0.8px 1.5px rgba(0,0,0,0.05)"></div>
<div class="a" style="left:187.4px;top:278.8px;width:64.4px;height:64.4px;border-radius:6px;background:#d4e2fb;border:1.4px solid #b9cef4"></div>
<svg style="left:209.9px;top:295.0px;" width="20" height="18.5" viewBox="0 0 20 18.5"><g transform="scale(1.1)"><path d="M9 0.8Q10 0.8 10.6 1.8L17.2 13.6Q17.8 15.6 16 15.8H2Q0.2 15.6 0.8 13.6L7.4 1.8Q8 0.8 9 0.8Z" fill="#7e9fd7"/><rect x="8.1" y="5" width="1.8" height="5.6" rx="0.8" fill="#d3e1fb"/><circle cx="9" cy="12.9" r="1.05" fill="#d3e1fb"/></g></svg>
<div class="t" style="left:195.0px;top:315.66px;font-size:9.4px;line-height:11.28px;color:#7a99d2;font-weight:400;-webkit-text-stroke:0.3px #7a99d2;letter-spacing:0.22px">Preliminary</div>
<div class="t" style="left:265.9px;top:287.08px;font-size:17.2px;line-height:20.64px;color:#555555;font-weight:400;-webkit-text-stroke:0.45px #555555;letter-spacing:0.6px">Example2</div>
<div class="t" style="left:265.9px;top:311.87px;font-size:8.21px;line-height:9.85px;color:#4a4a4a;font-weight:400;"><b>Start</b> 9th Oct 2021 23:14</div>
<div class="t" style="left:265.9px;top:324.46px;font-size:8.06px;line-height:9.67px;color:#4a4a4a;font-weight:400;"><b>End:</b> 11th Oct 2021 22:00</div>
<div class="a" style="left:430.4px;top:270.5px;width:200.8px;height:81.2px;border-radius:6px;background:#f5f5f5"></div>
<div class="a" style="left:417.9px;top:278.3px;width:65.2px;height:65.3px;border-radius:6px;background:#e8e8e8;border:1.2px solid #dedede"></div>
<svg style="left:440.7px;top:295.6px;" width="20" height="18.5" viewBox="0 0 20 18.5"><g transform="scale(1.1)"><path d="M9 0.8Q10 0.8 10.6 1.8L17.2 13.6Q17.8 15.6 16 15.8H2Q0.2 15.6 0.8 13.6L7.4 1.8Q8 0.8 9 0.8Z" fill="#cdcdcd"/><rect x="8.1" y="5" width="1.8" height="5.6" rx="0.8" fill="#e6e6e6"/><circle cx="9" cy="12.9" r="1.05" fill="#e6e6e6"/></g></svg>
<div class="t" style="left:437.4px;top:315.60px;font-size:9.0px;line-height:10.80px;color:#c8c8c8;font-weight:400;-webkit-text-stroke:0.3px #c8c8c8;letter-spacing:0.22px">Active</div>
<div class="t" style="left:496.7px;top:287.14px;font-size:17.1px;line-height:20.52px;color:#bcbcbc;font-weight:400;-webkit-text-stroke:0.45px #bcbcbc;letter-spacing:0.6px">Example1</div>
<div class="t" style="left:496.7px;top:311.90px;font-size:8.17px;line-height:9.80px;color:#bdbdbd;font-weight:400;"><b>Start</b> 9th Oct 2021 22:35</div>
<div class="t" style="left:496.7px;top:324.48px;font-size:8.04px;line-height:9.65px;color:#bdbdbd;font-weight:400;"><b>End:</b> 11th Oct 2021 22:00</div>
<div class="a" style="left:199.7px;top:361.8px;width:431.6px;height:116.2px;border-radius:7px;background:#ffffff;box-shadow:1.8px 2.4px 0 #e2e2e2"></div>
<div class="a" style="left:185.7px;top:386.05px;width:64px;height:63.5px;border-radius:6px;background:#d3e1fb;border:1px solid #b6ccf3;transform:rotate(-3.3deg)"></div>
<svg style="left:198px;top:398px;" width="40" height="40" viewBox="0 0 40 40"><g fill="none" stroke="#6f93d3" stroke-width="2" stroke-linecap="round"><path d="M4 21.5 C4 11 11 4.5 19.5 4.5 C25 4.5 30.5 7 33.5 10.5"/><path d="M35.5 15.5 Q36.4 18 36.4 20.5"/><path d="M8.8 28.5 C9 22 9.5 17 11.5 13.5"/><path d="M16.5 10 Q19 9.3 21 9.3 C27 9.3 31 14 31 20 V28.5"/><path d="M14.5 31 V21 C14.5 17.5 17 15 20.5 15 C24 15 26.5 17.5 26.5 21 V30.5"/><path d="M20.5 21 C20.5 27 20 32 18.5 36"/></g></svg>
<div class="t" style="left:378.4px;top:393.84px;font-size:17.6px;line-height:21.12px;color:#454545;font-weight:400;-webkit-text-stroke:0.45px #454545;letter-spacing:0.45px">No advisories</div>
<div class="t" style="left:265.4px;top:417.19px;font-size:8.19px;line-height:9.83px;color:#666666;font-weight:400;">Stay up to date via social media and our summary which is updated several times a day.</div>
<div class="t" style="left:265.4px;top:428.07px;font-size:8.22px;line-height:9.86px;color:#666666;font-weight:400;">Further reading can be found via our <span style="color:#3390da">disclaimer</span>, <span style="color:#3390da">archive</span> and <span style="color:#3390da">criteria</span> pages where you can</div>
<div class="t" style="left:265.4px;top:439.18px;font-size:8.2px;line-height:9.84px;color:#666666;font-weight:400;">sign up to get a web notifications.</div>
</body></html>
